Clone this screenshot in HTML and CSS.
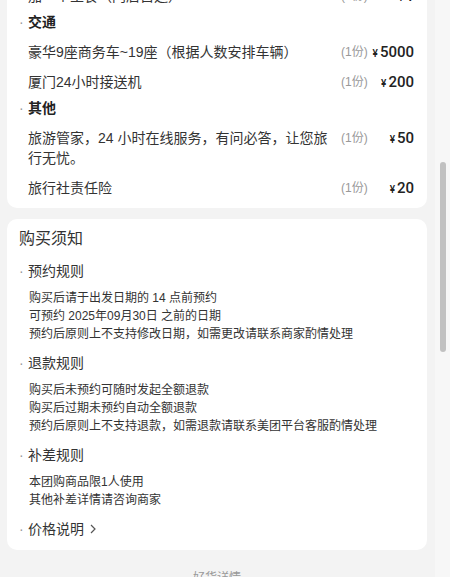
FILE: index.html
```html
<!DOCTYPE html>
<html>
<head>
  <meta charset="utf-8">
  <title>套餐详情</title>
  <link rel="stylesheet" href="styles.css">
</head>
<body>
  <div class="screen">
    <div class="page">
      <div class="page-inner">

        <!-- 套餐内容 -->
        <section class="card card-items">
          <div class="item">
            <div class="item-name">加一个主食（门店自选）</div>
            <div class="item-qty">(1份)</div>
            <div class="item-price"><span class="yen">¥</span>1</div>
          </div>

          <div class="cat"><span class="dot">·</span>交通</div>
          <div class="item">
            <div class="item-name">豪华9座商务车~19座（根据人数安排车辆）</div>
            <div class="item-qty">(1份)</div>
            <div class="item-price"><span class="yen">¥</span>5000</div>
          </div>
          <div class="item">
            <div class="item-name">厦门24小时接送机</div>
            <div class="item-qty">(1份)</div>
            <div class="item-price"><span class="yen">¥</span>200</div>
          </div>

          <div class="cat"><span class="dot">·</span>其他</div>
          <div class="item">
            <div class="item-name">旅游管家，24 小时在线服务，有问必答，让您旅行无忧。</div>
            <div class="item-qty">(1份)</div>
            <div class="item-price"><span class="yen">¥</span>50</div>
          </div>
          <div class="item">
            <div class="item-name">旅行社责任险</div>
            <div class="item-qty">(1份)</div>
            <div class="item-price"><span class="yen">¥</span>20</div>
          </div>
        </section>

        <!-- 购买须知 -->
        <section class="card notice">
          <h2 class="notice-title">购买须知</h2>

          <div class="rule">
            <div class="rule-title"><span class="dot">·</span>预约规则</div>
            <div class="rule-body">
              <p>购买后请于出发日期的 14 点前预约</p>
              <p>可预约 2025年09月30日 之前的日期</p>
              <p>预约后原则上不支持修改日期，如需更改请联系商家酌情处理</p>
            </div>
          </div>

          <div class="rule">
            <div class="rule-title"><span class="dot">·</span>退款规则</div>
            <div class="rule-body">
              <p>购买后未预约可随时发起全额退款</p>
              <p>购买后过期未预约自动全额退款</p>
              <p>预约后原则上不支持退款，如需退款请联系美团平台客服酌情处理</p>
            </div>
          </div>

          <div class="rule">
            <div class="rule-title"><span class="dot">·</span>补差规则</div>
            <div class="rule-body">
              <p>本团购商品限1人使用</p>
              <p>其他补差详情请咨询商家</p>
            </div>
          </div>

          <div class="rule">
            <div class="rule-title link"><span class="dot">·</span>价格说明
              <svg class="chevron" width="8" height="10" viewBox="0 0 8 10"><path d="M2 1l4 4-4 4" fill="none" stroke="#555" stroke-width="1.2"/></svg>
            </div>
          </div>
        </section>

        <div class="footer-title">好货详情</div>
      </div>
    </div>

    <div class="scrollbar"><div class="thumb"></div></div>
  </div>
</body>
</html>
```

FILE: styles.css
```css
/* 页面基础 */
body {
  margin: 0;
  font-family: "Liberation Sans", "Noto Sans CJK SC", sans-serif;
  color: #222;
  background-color: #f3f3f3;
}

.screen {
  display: flex;
  height: 577px;
  overflow: hidden;
}

.page {
  flex: 1;
  overflow: hidden;
  padding: 0 8px 0 7px;
}

/* 滚动位置 */
.page-inner {
  margin-top: -19px;
}

.card {
  background-color: #fff;
  border-radius: 10px;
}

/* 套餐内容 */
.card-items {
  padding: 0 13px 5px 12px;
  border-radius: 0 0 10px 10px;
}

.cat {
  font-size: 14px;
  font-weight: bold;
  height: 20px;
  line-height: 20px;
  padding: 1px 0 5px;
}

.dot {
  display: inline-block;
  width: 9px;
  color: #999;
  font-weight: normal;
}

.item {
  display: flex;
  align-items: flex-start;
  padding: 5px 0 5px 9px;
}

.item-name {
  flex: 1;
  font-size: 14px;
  line-height: 20px;
  color: #333;
}

.item-qty {
  width: 26px;
  height: 20px;
  margin-left: 11px;
  font-size: 12px;
  line-height: 20px;
  color: #999;
  white-space: nowrap;
}

.item-price {
  width: 47px;
  height: 20px;
  text-align: right;
  font-family: Roboto, "Liberation Sans", sans-serif;
  font-weight: 500;
  font-size: 15px;
  line-height: 20px;
  color: #222;
}

.yen {
  font-size: 10px;
  line-height: 1;
  margin-right: 2px;
}

/* 购买须知 */
.notice {
  margin-top: 11px;
  padding: 8px 12px 11px;
}

.notice-title {
  margin: 0;
  font-size: 16px;
  font-weight: normal;
  height: 24px;
  line-height: 24px;
  color: #333;
}

.rule {
  margin-top: 10px;
}

.rule-title {
  font-size: 14px;
  height: 20px;
  line-height: 20px;
  color: #333;
}

.rule-title.link {
  display: flex;
  align-items: center;
}

.chevron {
  margin-left: 5px;
}

.rule-body {
  margin: 8px 0 0 10px;
  font-size: 12px;
  line-height: 18px;
  color: #333;
}

.rule-body p {
  margin: 0;
  height: 18px;
}

.footer-title {
  padding-top: 19px;
  text-align: center;
  font-size: 12px;
  line-height: 18px;
  color: #999;
}

/* 滚动条 */
.scrollbar {
  width: 15px;
  background-color: #f7f7f7;
  padding-top: 162px;
}

.thumb {
  width: 6px;
  height: 190px;
  margin: 0 auto;
  border-radius: 3px;
  background-color: #c1c1c1;
}
```
